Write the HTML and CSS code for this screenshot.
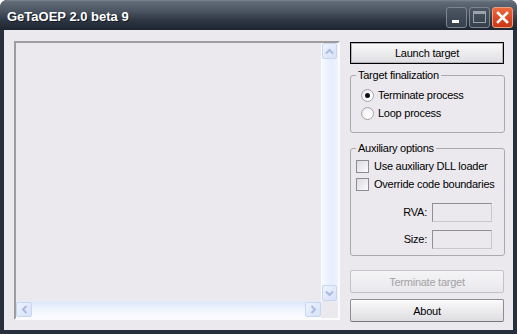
FILE: index.html
```html
<!DOCTYPE html>
<html lang="en">
<head>
    <meta charset="UTF-8">
    <title>GeTaOEP 2.0 beta 9</title>
    <link rel="stylesheet" href="styles.css">
</head>
<body>
    <div class="window">
        <div class="titlebar">
            <span class="title">GeTaOEP 2.0 beta 9</span>
            <div class="caption-btns">
                <span class="cap-btn cap-min"><i></i></span>
                <span class="cap-btn cap-max"><i></i></span>
                <span class="cap-btn cap-close">
                    <svg width="13" height="13" viewBox="0 0 13 13"><path d="M2 2 L11 11 M11 2 L2 11" stroke="#fff" stroke-width="2.6" stroke-linecap="square"/></svg>
                </span>
            </div>
        </div>
        <div class="client">
            <div class="listbox">
                <div class="list-main">
                    <div class="list-content"></div>
                    <div class="vscroll">
                        <span class="sb-btn">
                            <svg width="9" height="7" viewBox="0 0 9 7"><path d="M1 5.5 L4.5 2 L8 5.5" fill="none" stroke="#a9bbe2" stroke-width="2"/></svg>
                        </span>
                        <span class="sb-track"></span>
                        <span class="sb-btn">
                            <svg width="9" height="7" viewBox="0 0 9 7"><path d="M1 1.5 L4.5 5 L8 1.5" fill="none" stroke="#a9bbe2" stroke-width="2"/></svg>
                        </span>
                    </div>
                </div>
                <div class="list-bottom">
                    <div class="hscroll">
                        <span class="sb-btn">
                            <svg width="7" height="9" viewBox="0 0 7 9"><path d="M5.5 1 L2 4.5 L5.5 8" fill="none" stroke="#a9bbe2" stroke-width="2"/></svg>
                        </span>
                        <span class="sb-track"></span>
                        <span class="sb-btn">
                            <svg width="7" height="9" viewBox="0 0 7 9"><path d="M1.5 1 L5 4.5 L1.5 8" fill="none" stroke="#a9bbe2" stroke-width="2"/></svg>
                        </span>
                    </div>
                    <div class="corner"></div>
                </div>
            </div>

            <div class="side">
                <button class="btn btn-default">Launch target</button>

                <fieldset class="group group-final">
                    <legend>Target finalization</legend>
                    <label class="opt"><span class="radio checked"></span>Terminate process</label>
                    <label class="opt"><span class="radio"></span>Loop process</label>
                </fieldset>

                <fieldset class="group group-aux">
                    <legend>Auxiliary options</legend>
                    <label class="opt"><span class="check"></span>Use auxiliary DLL loader</label>
                    <label class="opt"><span class="check"></span>Override code boundaries</label>
                    <div class="field field-first"><span>RVA:</span><input type="text" disabled></div>
                    <div class="field"><span>Size:</span><input type="text" disabled></div>
                </fieldset>

                <button class="btn btn-disabled">Terminate target</button>
                <button class="btn btn-about">About</button>
            </div>
        </div>
    </div>
</body>
</html>
```

FILE: styles.css
```css
* { box-sizing: border-box; }
body { margin: 0; background: #fff; font-family: "Liberation Sans", Arial, sans-serif; }

.window { width: 517px; height: 334px; background: #27303c; border-radius: 7px 7px 0 0; display: flex; flex-direction: column; overflow: hidden; }

.titlebar { height: 30px; padding: 4px 4px 0 7px; display: flex; align-items: center; justify-content: space-between;
    background: linear-gradient(#7a8591 0px, #5f6a76 2px, #4c5662 11px, #2c3541 21px, #1d2531 30px);
    border-radius: 7px 7px 0 0; }
.title { color: #fff; font-weight: bold; font-size: 13px; text-shadow: 1px 1px 0 #141a22; margin-top: -1px; }
.caption-btns { display: flex; gap: 2px; }
.cap-btn { width: 21px; height: 21px; border-radius: 3px; border: 1px solid #7d8690; position: relative; display: flex; align-items: center; justify-content: center;
    background: linear-gradient(#4d5763, #353f4b); }
.cap-min i { position: absolute; left: 5px; bottom: 4px; width: 7px; height: 3px; background: #fff; }
.cap-max i { width: 13px; height: 12px; border: 1px solid #9aa2ab; border-top-width: 3px; }
.cap-close { border-color: #f0a080; background: linear-gradient(#ee6a3e, #d94620 60%, #c73818); }

.client { flex: 1; margin: 0 4px 4px 4px; background: #ebe9ed; display: flex; padding: 11px 8px 0 10px; gap: 10px; }

.listbox { width: 326px; height: 279px; border: 2px solid; border-color: #9d9c9f #fbfbfd #fbfbfd #9d9c9f; display: flex; flex-direction: column; }
.list-main { flex: 1; display: flex; }
.list-content { flex: 1; }
.vscroll { width: 17px; display: flex; flex-direction: column; background: linear-gradient(to right, #f6f8fe, #e6eefc 60%, #eef3fd); border-left: 1px solid #fdfdff; }
.list-bottom { height: 17px; display: flex; }
.hscroll { flex: 1; display: flex; background: linear-gradient(#dce7fa, #eef3fd 40%, #fbfcff); border-top: 1px solid #e4ecfb; }
.corner { width: 17px; background: #ebe9ed; }
.sb-track { flex: 1; }
.sb-btn { width: 16px; height: 16px; border: 1px solid #c9d6f0; border-radius: 2px; background: linear-gradient(135deg, #eef3fd, #d7e2f8);
    display: flex; align-items: center; justify-content: center; flex-shrink: 0; }
.vscroll .sb-btn { width: 15px; }
.hscroll .sb-btn { height: 15px; }

.side { width: 155px; display: flex; flex-direction: column; padding-top: 1px; font-size: 11px; letter-spacing: -0.25px; color: #000; }

.btn { font-family: inherit; font-size: 11px; letter-spacing: -0.25px; width: 154px; height: 23px; padding: 0; border-radius: 2px;
    border: 1px solid #8f8e92; border-bottom-color: #77767a; background: linear-gradient(#fafafa, #ececee 50%, #dedde1); color: #000; }
.btn-default { height: 22px; border: 1px solid #000; box-shadow: inset 0 0 0 1px #b4b3b8; border-radius: 0; }
.btn-disabled { margin-top: 14px; color: #a3a2a6; border-color: #c3c2c6; background: linear-gradient(#f4f3f6, #e9e8ec); }
.btn-about { margin-top: 6px; }

.group { margin: 0; border: 1px solid #aaa9ae; border-radius: 3px; padding: 0; min-width: 0; }
.group legend { padding: 0 2px; line-height: 13px; }
.group-final { margin-top: 5px; padding: 1px 0 10px 10px; }
.group-final legend { margin-left: -5px; }
.group-aux { margin-top: 9px; padding: 1px 12px 6px 5px; }
.group-aux legend { margin-left: 0; }

.opt { display: flex; align-items: center; height: 18px; white-space: nowrap; }
.radio { width: 13px; height: 13px; flex-shrink: 0; border-radius: 50%; border: 1px solid #a5a4a9; margin-right: 4px;
    background: radial-gradient(circle at 65% 65%, #ffffff 30%, #e4e3e8 90%); position: relative; }
.radio.checked::after { content: ""; position: absolute; left: 3px; top: 3px; width: 5px; height: 5px; border-radius: 50%; background: #111; }
.group-final .opt:first-of-type { margin-top: 3px; }
.check { width: 13px; height: 13px; flex-shrink: 0; border: 1px solid #8d8c91; margin-right: 5px; background: linear-gradient(135deg, #dcdbe0, #fbfbfc); }
.group-aux .opt:first-of-type { margin-top: 1px; }

.field { display: flex; justify-content: flex-end; align-items: center; height: 20px; margin-top: 7px; gap: 5px; }
.field-first { margin-top: 9px; }
.field input { width: 60px; height: 19px; border: 1px solid; border-color: #8f8e92 #c8c7cb #c8c7cb #8f8e92; background: #ebe9ed; padding: 0; }
```
